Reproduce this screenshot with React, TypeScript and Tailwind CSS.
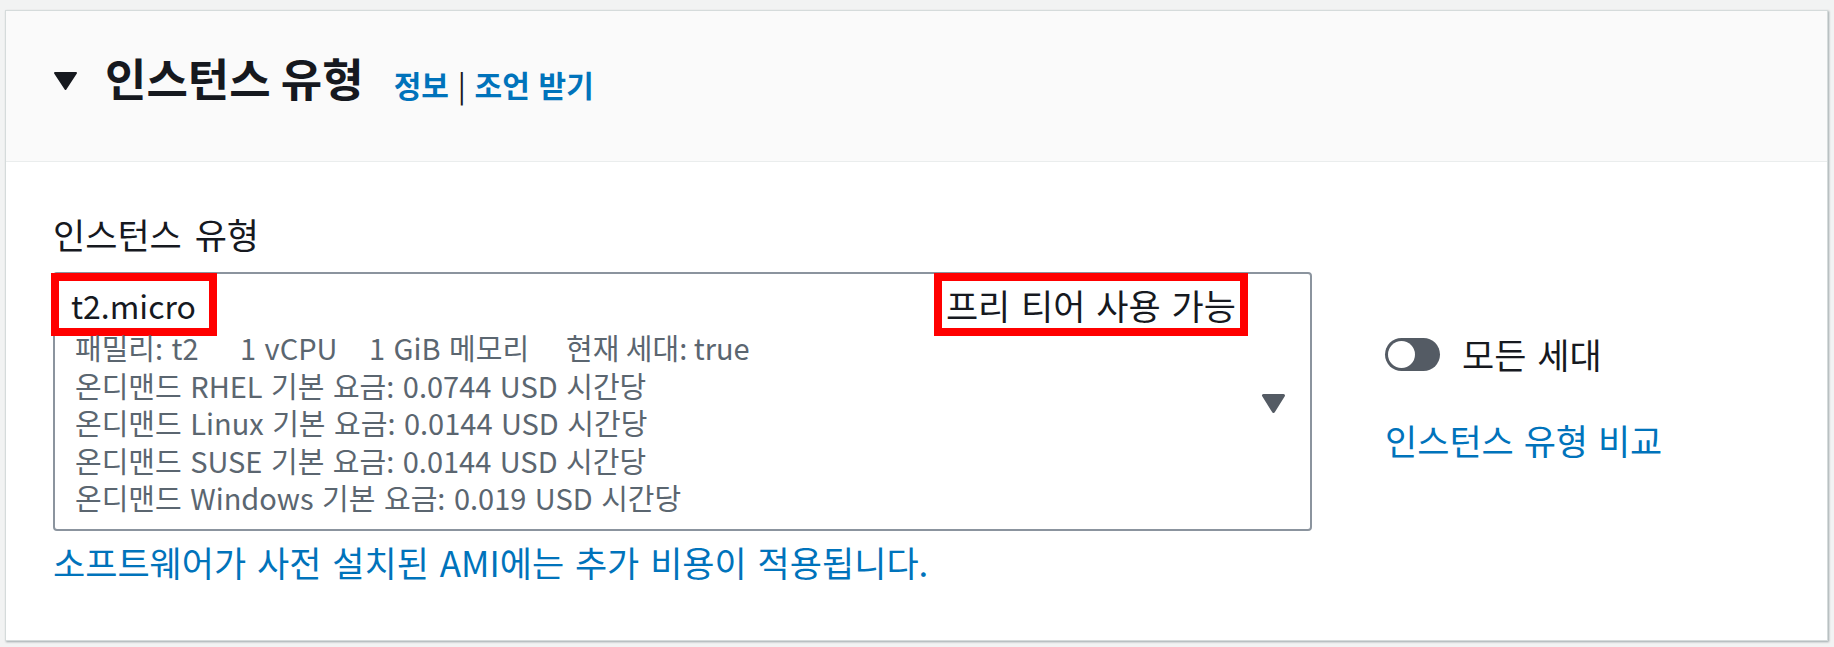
import React from 'react';

const font = { fontFamily: '"Noto Sans CJK KR", "Noto Sans", sans-serif' };

const details = [
    '온디맨드 RHEL 기본 요금: 0.0744 USD 시간당',
    '온디맨드 Linux 기본 요금: 0.0144 USD 시간당',
    '온디맨드 SUSE 기본 요금: 0.0144 USD 시간당',
    '온디맨드 Windows 기본 요금: 0.019 USD 시간당',
];

const HeaderCaret = () => (
    <svg width="25" height="20" viewBox="0 0 25 20" className="mt-[5px] shrink-0">
        <path d="M2 2 L23 2 L12.5 18 Z" fill="#16191f" stroke="#16191f" strokeWidth="2" strokeLinejoin="round" />
    </svg>
);

const SelectCaret = () => (
    <svg width="25" height="21" viewBox="0 0 25 21" className="ml-[13px] mt-[4px] shrink-0">
        <path d="M2.5 2.5 L22.5 2.5 L12.5 18.5 Z" fill="#545b64" stroke="#545b64" strokeWidth="3" strokeLinejoin="round" />
    </svg>
);

export default function App() {
    return (
        <div className="w-[1834px] h-[647px] bg-[#f2f3f3] pt-[10px] pl-[5px] pr-[6px] pb-[6px]" style={font}>
            <div className="h-[631px] bg-white border border-[#d5dbdb] shadow-[1px_1px_2px_rgba(0,28,36,0.35)] flex flex-col">
                {/* header */}
                <div className="h-[151px] bg-[#fafafa] border-b border-[#eaeded] flex items-center pl-[47px] pb-[15px]">
                    <HeaderCaret />
                    <div className="flex items-baseline ml-[27px]">
                        <h2 className="text-[45px] leading-[56px] font-bold text-[#16191f]">인스턴스 유형</h2>
                        <div className="ml-[30px] text-[30px] font-bold text-[#0073bb] [word-spacing:2px]">
                            정보 <span className="font-normal text-[#16191f]">|</span> 조언 받기
                        </div>
                    </div>
                </div>

                {/* body */}
                <div className="flex items-start pl-[47px] pt-[52px] [word-spacing:5px]">
                    <div className="w-[1259px]">
                        <div className="text-[35px] leading-[40px] text-[#16191f]">인스턴스 유형</div>
                        <div className="mt-[18px] border-2 border-[#8b949e] rounded-[4px] flex items-center pl-[20px] pr-[24px]">
                            <div className="flex-1 pb-[12px]">
                                <div className="flex justify-between items-start -mt-[1px]">
                                    <span className="-ml-[24px] border-[8px] border-[#ff0000] pl-[12px] pr-[13px] pt-[4px] pb-[2px] text-[32px] leading-[41px] text-[#16191f]">
                                        t2.micro
                                    </span>
                                    <span className="border-[8px] border-[#ff0000] pl-[4px] pr-[4px] pt-[3px] pb-[3px] text-[35px] leading-[41px] text-[#16191f] [word-spacing:3px]">
                                        프리 티어 사용 가능
                                    </span>
                                </div>
                                <div className="-mt-[7px] text-[29px] leading-[37.5px] text-[#5b6670] [word-spacing:2px]">
                                    <div className="flex">
                                        <span className="w-[165px] shrink-0">패밀리: t2</span>
                                        <span className="w-[129px] shrink-0">1 vCPU</span>
                                        <span className="w-[197px] shrink-0">1 GiB 메모리</span>
                                        <span className="[word-spacing:0px]">현재 세대: true</span>
                                    </div>
                                    {details.map((line) => (
                                        <div key={line}>{line}</div>
                                    ))}
                                </div>
                            </div>
                            <SelectCaret />
                        </div>
                        <div className="mt-[11px] text-[35px] leading-[40px] text-[#0073bb] [word-spacing:3px]">
                            소프트웨어가 사전 설치된 AMI에는 추가 비용이 적용됩니다.
                        </div>
                    </div>

                    <div className="ml-[73px] mt-[120px]">
                        <div className="flex items-center">
                            <div className="w-[55px] h-[33px] rounded-full bg-[#545b64] p-[3px] flex items-center">
                                <div className="w-[27px] h-[27px] rounded-full bg-white"></div>
                            </div>
                            <span className="ml-[22px] text-[35px] leading-[40px] text-[#16191f] [word-spacing:3px]">모든 세대</span>
                        </div>
                        <div className="mt-[46px] text-[35px] leading-[40px] text-[#0073bb] [word-spacing:2px]">인스턴스 유형 비교</div>
                    </div>
                </div>
            </div>
        </div>
    );
}
